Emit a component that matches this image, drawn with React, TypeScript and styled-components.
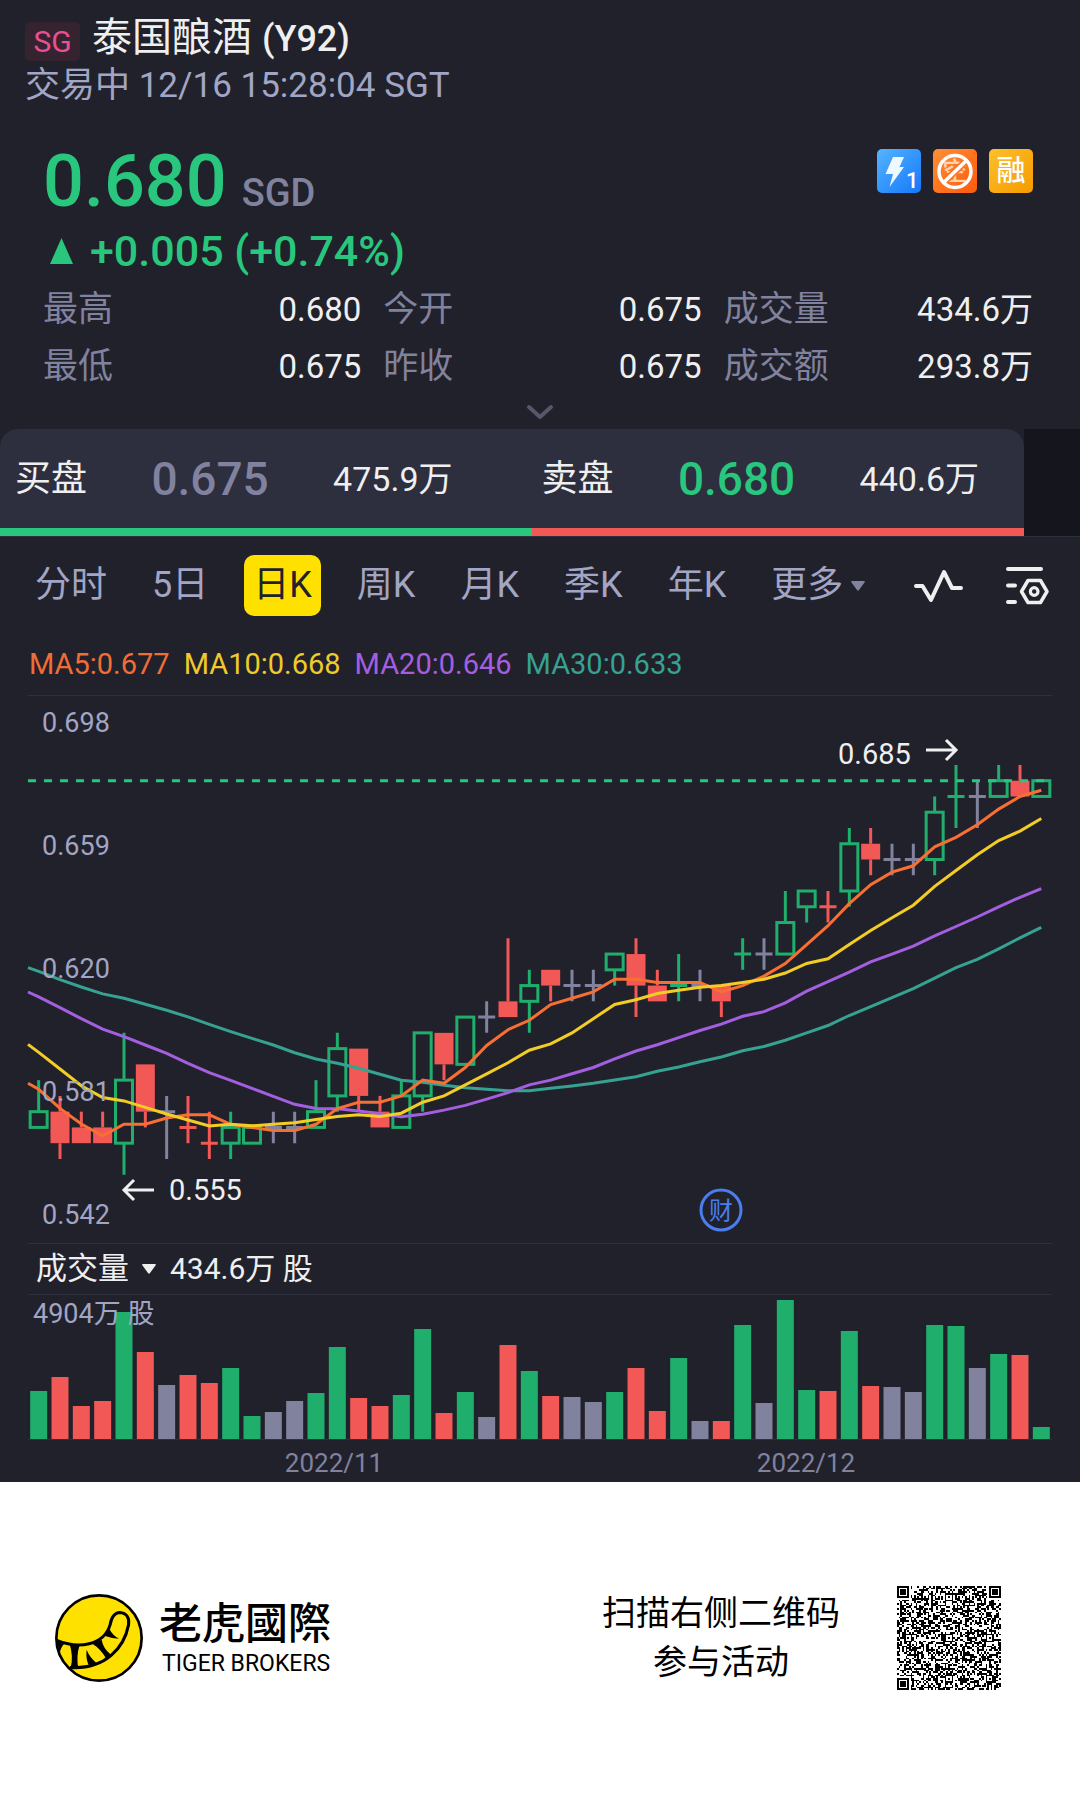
import React from "react";
import styled, { createGlobalStyle } from "styled-components";

const color = {
  page: "#21212b",
  panel: "#2d2e3e",
  line: "#2f303e",
  text: "#efeff0",
  soft: "#a2a5c4",
  muted: "#80829e",
  up: "#29c77e",
  candleUp: "#20ae6c",
  down: "#f25956",
  yellow: "#ffe100",
};

const fontStack = 'Roboto, "Noto Sans CJK SC", sans-serif';

const GlobalStyle = createGlobalStyle`
  *, *::before, *::after { box-sizing: border-box; }
  body { margin: 0; background: #fff; font-family: ${fontStack}; }
  button { border: 0; padding: 0; background: none; font: inherit; color: inherit; cursor: pointer; }
  h1, p, dl, dd, dt { margin: 0; font-weight: 400; }
  svg { display: block; flex: none; }
`;

const Screen = styled.main`
  background: ${color.page};
  color: ${color.text};
`;

const Header = styled.header`
  padding: 12px 25px 0;
`;

const TitleRow = styled.div`
  display: flex;
  align-items: center;
  gap: 12px;
  height: 52px;
`;

const MarketBadge = styled.span`
  display: flex;
  align-items: center;
  justify-content: center;
  width: 55px;
  height: 39px;
  margin-top: 6px;
  border-radius: 5px;
  background: #35232f;
  color: #ea4e93;
  font-size: 30px;
`;

const Title = styled.h1`
  font-size: 40px;
  line-height: 52px;
`;

const Code = styled.span`
  font-size: 36px;
  font-weight: 500;
`;

const Status = styled.p`
  color: ${color.soft};
  font-size: 35px;
  line-height: 44px;
`;

const Quote = styled.section`
  padding: 32px 47px 0 43px;
`;

const PriceRow = styled.div`
  display: flex;
  justify-content: space-between;
  align-items: flex-start;
`;

const Price = styled.p`
  color: ${color.up};
  font-size: 72px;
  font-weight: 500;
  line-height: 84px;
`;

const Currency = styled.span`
  margin-left: 15px;
  color: ${color.muted};
  font-size: 38px;
  line-height: 38px;
`;

const Badges = styled.div`
  display: flex;
  gap: 12px;
  padding-top: 9px;
`;

const Badge = styled.span<{ $from: string; $to: string }>`
  display: flex;
  align-items: center;
  justify-content: center;
  width: 44px;
  height: 44px;
  border-radius: 5px;
  background: linear-gradient(135deg, ${(p) => p.$from}, ${(p) => p.$to});
  color: #fff;
  font-size: 29px;
  font-weight: 500;
  line-height: 44px;
`;

const Change = styled.p`
  display: flex;
  align-items: center;
  gap: 17px;
  padding-left: 7px;
  color: ${color.up};
  font-size: 43px;
  font-weight: 500;
  line-height: 54px;
`;

const Stats = styled.dl`
  display: grid;
  grid-template-columns: 318fr 318fr 309fr;
  column-gap: 22px;
  margin-top: 3px;
`;

const Stat = styled.div`
  display: flex;
  justify-content: space-between;
  line-height: 57px;
`;

const StatLabel = styled.dt`
  color: ${color.muted};
  font-size: 35px;
`;

const StatValue = styled.dd`
  font-size: 33px;
`;

const Expand = styled.button`
  display: flex;
  align-items: center;
  justify-content: center;
  width: 100%;
  height: 34px;
`;

const DepthRow = styled.section`
  display: flex;
  padding-right: 56px;
  background: linear-gradient(#15151e, #15151e) right / 56px 100% no-repeat;
  border-bottom: 1px solid ${color.line};
`;

const Depth = styled.div`
  flex: 1;
  overflow: hidden;
  border-radius: 18px 18px 0 0;
  background: ${color.panel};
`;

const DepthSides = styled.div`
  display: grid;
  grid-template-columns: 1fr 1fr;
  column-gap: 89px;
  height: 99px;
  padding: 0 45px 0 15px;
`;

const DepthSide = styled.div`
  display: flex;
  align-items: center;
  justify-content: space-between;
  font-size: 36px;
  line-height: 52px;
`;

const DepthPrice = styled.span<{ $color: string }>`
  color: ${(p) => p.$color};
  font-size: 46px;
  font-weight: 500;
`;

const DepthVolume = styled.span`
  font-size: 34px;
`;

const DepthBar = styled.div`
  display: flex;
  height: 8px;
`;

const DepthShare = styled.span<{ $share: number; $color: string }>`
  flex: ${(p) => p.$share};
  background: ${(p) => p.$color};
`;

const Toolbar = styled.nav`
  display: flex;
  align-items: center;
  justify-content: space-between;
  padding: 18px 30px 18px 26px;
`;

const Tabs = styled.div`
  display: flex;
  gap: 27px;
`;

const Tab = styled.button<{ $active?: boolean }>`
  display: flex;
  align-items: center;
  justify-content: center;
  gap: 8px;
  height: 61px;
  padding: 0 9px;
  border-radius: 10px;
  background: ${(p) => (p.$active ? color.yellow : "transparent")};
  color: ${(p) => (p.$active ? "#21212b" : color.soft)};
  font-size: 36px;
  line-height: 61px;
  white-space: nowrap;
`;

const Tools = styled.div`
  display: flex;
  gap: 41px;
`;

const ChartArea = styled.section`
  padding: 0 28px;
`;

const Averages = styled.div`
  display: flex;
  gap: 14px;
  padding-left: 1px;
  border-bottom: 1px solid ${color.line};
  font-size: 29px;
  line-height: 61px;
`;

const Average = styled.span<{ $color: string }>`
  color: ${(p) => p.$color};
`;

const Plot = styled.svg`
  width: 100%;
  height: auto;
  overflow: visible;
  font-family: ${fontStack};
`;

const VolumeHead = styled.div`
  display: flex;
  align-items: center;
  gap: 14px;
  border-top: 1px solid ${color.line};
  border-bottom: 1px solid ${color.line};
  padding-left: 8px;
  font-size: 30px;
  line-height: 50px;
`;

const VolumePicker = styled.button`
  display: flex;
  align-items: center;
  gap: 13px;
  font-size: 31px;
`;

const Footer = styled.footer`
  display: flex;
  align-items: center;
  justify-content: space-between;
  padding: 104px 79px 104px 55px;
  color: #000;
`;

const Brand = styled.div`
  display: flex;
  align-items: center;
  gap: 16px;
`;

const BrandText = styled.div`
  display: flex;
  flex-direction: column;
`;

const BrandName = styled.span`
  font-family: Roboto, "Noto Sans CJK TC", sans-serif;
  font-size: 43px;
  font-weight: 500;
  line-height: 52px;
`;

const BrandLatin = styled.span`
  padding-left: 3px;
  font-size: 23px;
  line-height: 28px;
`;

const Invite = styled.div`
  display: flex;
  align-items: center;
  gap: 57px;
`;

const InviteText = styled.p`
  font-size: 34px;
  line-height: 49px;
  text-align: center;
`;

type Tone = "up" | "down" | "flat";

/* tone, high, body top, body bottom, low (in 0.005 steps below 0.680), volume */
const candles: [Tone, number, number, number, number, number][] = [
  ["up", 19, 21, 22, 22, 48], ["down", 20, 21, 23, 24, 62], ["down", 21, 22, 23, 23, 33],
  ["down", 21, 22, 23, 23, 38], ["up", 16, 19, 23, 25, 127], ["down", 18, 18, 21, 22, 87],
  ["flat", 20, 21, 21, 24, 54], ["down", 20, 22, 22, 23, 64], ["down", 21, 23, 23, 24, 56],
  ["up", 21, 22, 23, 24, 71], ["up", 22, 22, 23, 23, 23], ["flat", 21, 22, 22, 23, 27],
  ["flat", 21, 22, 22, 23, 38], ["up", 19, 21, 22, 22, 46], ["up", 16, 17, 20, 21, 92],
  ["down", 17, 17, 20, 21, 41], ["down", 20, 21, 22, 22, 33], ["up", 19, 20, 22, 22, 44],
  ["up", 16, 16, 20, 21, 110], ["down", 16, 16, 18, 19, 26], ["up", 15, 15, 18, 18, 47],
  ["flat", 14, 15, 15, 16, 22], ["down", 10, 14, 15, 15, 94], ["up", 12, 13, 14, 16, 68],
  ["down", 12, 12, 13, 14, 43], ["flat", 12, 13, 13, 14, 42], ["flat", 12, 13, 13, 14, 37],
  ["up", 11, 11, 12, 13, 47], ["down", 10, 11, 13, 15, 71], ["down", 12, 13, 14, 14, 28],
  ["up", 11, 13, 13, 14, 81], ["flat", 12, 13, 13, 14, 18], ["down", 13, 13, 14, 15, 18],
  ["up", 10, 11, 11, 12, 114], ["flat", 10, 11, 11, 12, 36], ["up", 7, 9, 11, 11, 139],
  ["up", 7, 7, 8, 9, 49], ["down", 7, 8, 8, 9, 48], ["up", 3, 4, 7, 8, 108],
  ["down", 3, 4, 5, 6, 53], ["flat", 4, 5, 5, 6, 52], ["flat", 4, 5, 5, 6, 47],
  ["up", 1, 2, 5, 6, 114], ["up", -1, 1, 1, 3, 113], ["flat", 0, 1, 1, 3, 71],
  ["up", -1, 0, 1, 1, 85], ["down", -1, 0, 1, 1, 84], ["up", 0, 0, 1, 1, 12],
];

const toneColor: Record<Tone, string> = { up: color.candleUp, down: color.down, flat: color.muted };

const STEP = 1024 / 48;
const centre = (i: number) => STEP * (i + 0.5);
const level = (k: number) => 84.7 + 15.76 * k;
const closes = candles.map(([tone, , top, bottom]) => (tone === "up" ? top : bottom));

/* The first points of each average come from days left of the plot; entry 0 is the plot's edge. */
const averages = [
  {
    name: "MA30", days: 30, color: "#36a292",
    lead: [11.86, 12.1, 12.62, 13.09, 13.53, 13.81, 14.19, 14.57, 14.99, 15.46, 15.92, 16.35, 16.77, 17.26, 17.66, 17.93,
      18.25, 18.63, 19.01, 19.14, 19.33, 19.48, 19.58, 19.67, 19.67, 19.52, 19.37, 19.2, 18.99, 18.78],
  },
  {
    name: "MA20", days: 20, color: "#a45fe0",
    lead: [13.41, 13.72, 14.4, 15.1, 15.76, 16.24, 16.77, 17.3, 17.93, 18.53, 19.01, 19.52, 20.03, 20.53, 20.79, 20.81,
      20.96, 21.13, 21.32, 21.17],
  },
  { name: "MA5", days: 5, color: "#f86f33", lead: [19.2, 19.58, 20.79, 21.78, 22.54] },
  {
    name: "MA10", days: 10, color: "#f3cd25",
    lead: [16.73, 17.24, 18.29, 19.35, 20.11, 20.32, 20.73, 21.15, 21.53, 21.91],
  },
];

function averagePoints(days: number, lead: number[]) {
  const points = [`0,${level(lead[0]).toFixed(1)}`];
  closes.forEach((_, i) => {
    const value =
      i + 1 < lead.length
        ? lead[i + 1]
        : closes.slice(Math.max(0, i - days + 1), i + 1).reduce((a, b) => a + b, 0) / Math.min(days, i + 1);
    points.push(`${centre(i).toFixed(1)},${level(value).toFixed(1)}`);
  });
  return points.join(" ");
}

function Candle({ index }: { index: number }) {
  const [tone, high, top, bottom, low] = candles[index];
  const x = centre(index);
  const stroke = toneColor[tone];
  if (top === bottom) {
    return (
      <g stroke={stroke} strokeWidth="3">
        <path d={`M${x} ${level(high)}V${level(low)}M${x - 8.5} ${level(top)}H${x + 8.5}`} />
      </g>
    );
  }
  return (
    <g stroke={stroke} strokeWidth="3">
      <path d={`M${x} ${level(high)}V${level(top)}M${x} ${level(bottom)}V${level(low)}`} />
      {tone === "up" ? (
        <rect x={x - 8.5} y={level(top)} width="17" height={level(bottom) - level(top)} fill="none" />
      ) : (
        <rect x={x - 9.5} y={level(top)} width="19" height={level(bottom) - level(top)} fill={stroke} stroke="none" />
      )}
    </g>
  );
}

function PricePlot() {
  return (
    <Plot viewBox="0 0 1024 547" role="img" aria-label="日K">
      {candles.map((_, i) => (
        <Candle key={i} index={i} />
      ))}
      <path d="M0 84.7H1024" stroke={color.up} strokeWidth="3" strokeDasharray="8 8" />
      {averages.map((a) => (
        <polyline key={a.name} points={averagePoints(a.days, a.lead)} fill="none" stroke={a.color} strokeWidth="3" />
      ))}
      <g fill={color.soft} fontSize="27">
        {["0.698", "0.659", "0.620", "0.581", "0.542"].map((label, i) => (
          <text key={label} x="14" y={36 + i * 123}>
            {label}
          </text>
        ))}
      </g>
      <g fill={color.text} fontSize="29">
        <text x="810" y="68">0.685</text>
        <text x="141" y="504">0.555</text>
      </g>
      <g fill="none" stroke={color.text} strokeWidth="3">
        <path d="M898 54H928M918 44L928 54L918 64" />
        <path d="M126 494H96M106 484L96 494L106 504" />
      </g>
      <circle cx="693" cy="514" r="20" fill={color.page} stroke="#4a7eee" strokeWidth="3" />
      <text x="693" y="523" fill="#4a7eee" fontSize="24" textAnchor="middle">
        财
      </text>
    </Plot>
  );
}

function VolumePlot() {
  return (
    <Plot viewBox="0 0 1024 187" role="img" aria-label="成交量">
      <path d="M0 144.5H1024" stroke={color.line} />
      {candles.map(([tone, , , , , volume], i) => (
        <rect key={i} x={centre(i) - 8.5} y={144 - volume} width="17" height={volume} fill={toneColor[tone]} />
      ))}
      <text x="5" y="28" fill={color.soft} fontSize="27">
        4904万 股
      </text>
      <g fill={color.muted} fontSize="26" textAnchor="middle">
        <text x="306" y="177">2022/11</text>
        <text x="778" y="177">2022/12</text>
      </g>
    </Plot>
  );
}

function Caret({ fill }: { fill: string }) {
  return (
    <svg width="14" height="10" viewBox="0 0 14 10">
      <path d="M1 0H13Q14.500 0 13.500 1.500L8 9Q7 10.500 6 9L.5 1.500Q-.5 0 1 0Z" fill={fill} />
    </svg>
  );
}

function TigerMark() {
  return (
    <svg width="88" height="88" viewBox="0 0 262 262">
      <circle cx="131" cy="131" r="127" fill={color.yellow} stroke="#000" strokeWidth="8" />
      <path
        d="M5 138C70 164 145 154 164 92C168 68 176 56 193 55C214 56 222 72 219 92C206 160 150 226 44 219"
        fill="none"
        stroke="#000"
        strokeWidth="9"
      />
      <path d="M5 138L30 146Q18 156 14 176ZM44 150L73 153Q63 184 69 219L47 218Q55 186 44 150ZM94 166Q104 190 124 206L102 214Q91 198 94 166ZM111 148L139 136Q143 162 166 180L152 192Q137 164 111 148ZM147 124L162 104Q172 124 191 133Q168 132 147 124Z" />
    </svg>
  );
}

const QR_SIZE = 61;

function qrPath() {
  const anchors = [[0, 0], [QR_SIZE - 7, 0], [0, QR_SIZE - 7]];
  const marks = [[30, 6], [6, 30], [30, 30], [54, 30], [30, 54], [54, 54]];
  let seed = 20221216;
  let d = "";
  for (let y = 0; y < QR_SIZE; y++) {
    for (let x = 0; x < QR_SIZE; x++) {
      seed = (seed * 1103515 + 12345) % 2147483648;
      let on = (seed >> 14) % 2 === 0;
      if (x === 6 || y === 6) on = (x + y) % 2 === 0;
      for (const [mx, my] of marks) {
        const r = Math.max(Math.abs(x - mx), Math.abs(y - my));
        if (r <= 2) on = r !== 1;
      }
      for (const [ax, ay] of anchors) {
        const r = Math.max(Math.abs(x - ax - 3), Math.abs(y - ay - 3));
        if (r <= 4) on = r !== 4 && r !== 2;
      }
      if (on) d += `M${x} ${y}h1v1h-1z`;
    }
  }
  return d;
}

function QrCode() {
  return (
    <svg width="104" height="104" viewBox={`0 0 ${QR_SIZE} ${QR_SIZE}`} shapeRendering="crispEdges" role="img" aria-label="二维码">
      <path d={qrPath()} fill="#000" />
    </svg>
  );
}

const stats = [
  ["最高", "0.680"], ["今开", "0.675"], ["成交量", "434.6万"],
  ["最低", "0.675"], ["昨收", "0.675"], ["成交额", "293.8万"],
];

const periods = ["分时", "5日", "日K", "周K", "月K", "季K", "年K"];

export default function App() {
  return (
    <>
      <GlobalStyle />
      <Screen>
        <Header>
          <TitleRow>
            <MarketBadge>SG</MarketBadge>
            <Title>
              泰国酿酒 <Code>(Y92)</Code>
            </Title>
          </TitleRow>
          <Status>交易中 12/16 15:28:04 SGT</Status>
        </Header>

        <Quote>
          <PriceRow>
            <Price>
              0.680<Currency>SGD</Currency>
            </Price>
            <Badges>
              <Badge $from="#55b4ff" $to="#1478fb">
                <svg width="44" height="44" viewBox="0 0 44 44">
                  <path d="M16 8H27L22.500 18H27L12.500 38L16 25H8.500Z" fill="#eef8ff" />
                  <text x="29" y="39" fill="#fff" fontSize="22" fontWeight="500">1</text>
                </svg>
              </Badge>
              <Badge $from="#ff8f35" $to="#ff5a0c">
                <svg width="44" height="44" viewBox="0 0 44 44">
                  <text x="22" y="31" fill="#ffd2b0" fontSize="25" fontWeight="500" textAnchor="middle">空</text>
                  <path d="M10 34L34 11" stroke="#fc7426" strokeWidth="7" />
                  <circle cx="22" cy="22.500" r="16" fill="none" stroke="#fff" strokeWidth="3.500" />
                  <path d="M10 34L34 11" stroke="#fff" strokeWidth="3.500" />
                </svg>
              </Badge>
              <Badge $from="#fcc02c" $to="#f79a00">融</Badge>
            </Badges>
          </PriceRow>
          <Change>
            <svg width="23" height="26" viewBox="0 0 23 26">
              <path d="M11.500 0L23 26H0Z" fill={color.up} />
            </svg>
            +0.005 (+0.74%)
          </Change>
          <Stats>
            {stats.map(([label, value]) => (
              <Stat key={label}>
                <StatLabel>{label}</StatLabel>
                <StatValue>{value}</StatValue>
              </Stat>
            ))}
          </Stats>
        </Quote>
        <Expand aria-label="展开">
          <svg width="28" height="16" viewBox="0 0 28 16">
            <path d="M3 3L14 13L25 3" fill="none" stroke="#55576a" strokeWidth="4" strokeLinecap="round" strokeLinejoin="round" />
          </svg>
        </Expand>

        <DepthRow>
          <Depth>
            <DepthSides>
              <DepthSide>
                <span>买盘</span>
                <DepthPrice $color={color.muted}>0.675</DepthPrice>
                <DepthVolume>475.9万</DepthVolume>
              </DepthSide>
              <DepthSide>
                <span>卖盘</span>
                <DepthPrice $color={color.up}>0.680</DepthPrice>
                <DepthVolume>440.6万</DepthVolume>
              </DepthSide>
            </DepthSides>
            <DepthBar>
              <DepthShare $share={475.9} $color={color.up} />
              <DepthShare $share={440.6} $color={color.down} />
            </DepthBar>
          </Depth>
        </DepthRow>

        <Toolbar>
          <Tabs>
            {periods.map((period) => (
              <Tab key={period} $active={period === "日K"}>
                {period}
              </Tab>
            ))}
            <Tab>
              更多
              <Caret fill={color.muted} />
            </Tab>
          </Tabs>
          <Tools>
            <button aria-label="指标">
              <svg width="50" height="36" viewBox="0 0 50 36" fill="none" stroke={color.text} strokeWidth="4" strokeLinecap="round" strokeLinejoin="round">
                <path d="M3 18H9.500L18 32L31 4L39 20H48" />
              </svg>
            </button>
            <button aria-label="设置">
              <svg width="46" height="42" viewBox="0 0 46 42" fill="none" stroke={color.text} strokeWidth="4" strokeLinecap="round" strokeLinejoin="round">
                <path d="M4 4H37M4 20.500H11M4 37H11" />
                <path d="M17.500 26.500L24 15.500H36.500L43 26.500L36.500 37.500H24Z" strokeWidth="3.500" />
                <circle cx="30.200" cy="26.500" r="3.800" strokeWidth="3.200" />
              </svg>
            </button>
          </Tools>
        </Toolbar>

        <ChartArea>
          <Averages>
            <Average $color="#f26d35">MA5:0.677</Average>
            <Average $color="#efca2a">MA10:0.668</Average>
            <Average $color="#a45fe0">MA20:0.646</Average>
            <Average $color="#36a292">MA30:0.633</Average>
          </Averages>
          <PricePlot />
          <VolumeHead>
            <VolumePicker>
              成交量
              <Caret fill={color.text} />
            </VolumePicker>
            <span>434.6万 股</span>
          </VolumeHead>
          <VolumePlot />
        </ChartArea>
      </Screen>

      <Footer>
        <Brand>
          <TigerMark />
          <BrandText>
            <BrandName lang="zh-Hant">老虎國際</BrandName>
            <BrandLatin>TIGER BROKERS</BrandLatin>
          </BrandText>
        </Brand>
        <Invite>
          <InviteText>
            扫描右侧二维码
            <br />
            参与活动
          </InviteText>
          <QrCode />
        </Invite>
      </Footer>
    </>
  );
}
